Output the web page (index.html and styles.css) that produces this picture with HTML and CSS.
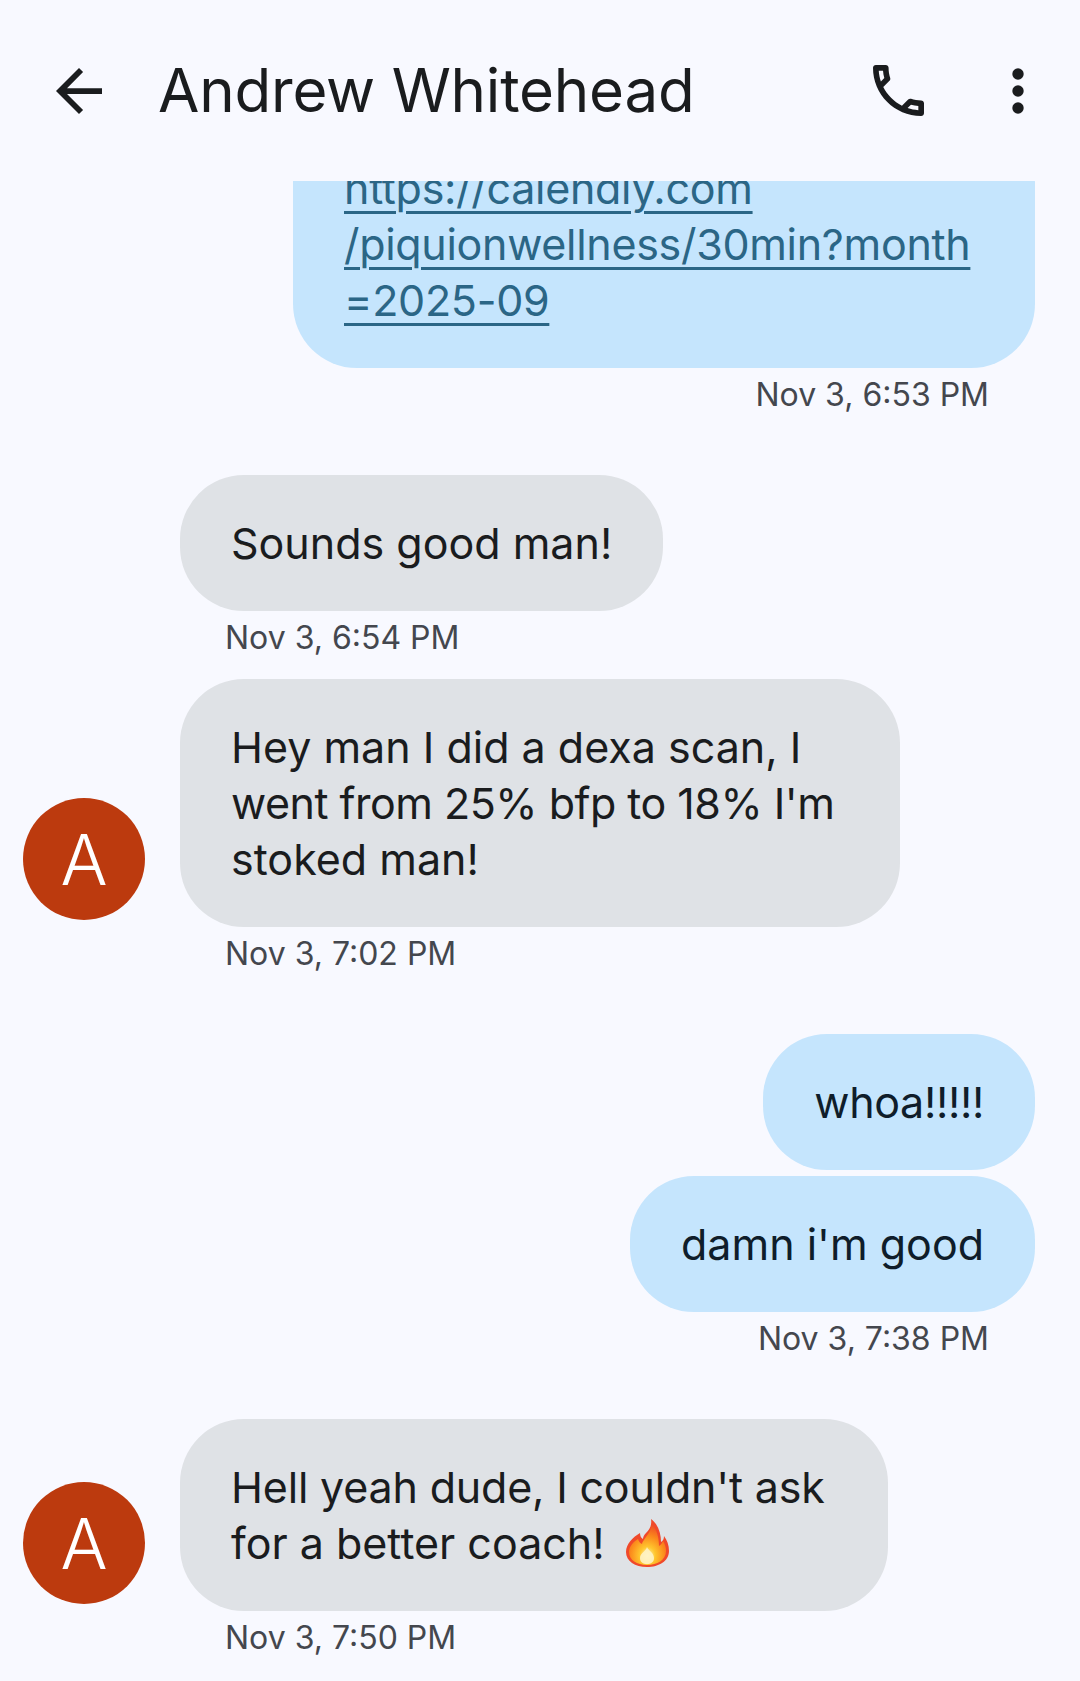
FILE: index.html
```html
<!DOCTYPE html>
<html lang="en">
<head>
<meta charset="utf-8">
<title>Andrew Whitehead</title>
<link rel="stylesheet" href="styles.css">
</head>
<body>
<div class="screen">
  <header class="appbar">
    <svg class="icon-back" viewBox="4 4 16 16" aria-hidden="true"><path d="M20 11H7.83l5.59-5.59L12 4l-8 8 8 8 1.41-1.41L7.83 13H20v-2z"/></svg>
    <h1 class="title">Andrew Whitehead</h1>
    <svg class="icon-call" viewBox="3 3 18 18" aria-hidden="true"><path d="M6.54 5c.06.89.21 1.76.45 2.59l-1.2 1.2c-.41-1.2-.67-2.47-.76-3.79h1.51m9.86 12.02c.85.24 1.72.39 2.6.45v1.49c-1.32-.09-2.59-.35-3.8-.75l1.2-1.19M7.5 3H4c-.55 0-1 .45-1 1 0 9.39 7.61 17 17 17 .55 0 1-.45 1-1v-3.49c0-.55-.45-1-1-1-1.24 0-2.45-.2-3.57-.57-.1-.04-.21-.05-.31-.05-.26 0-.51.1-.71.29l-2.2 2.2c-2.83-1.45-5.15-3.76-6.59-6.59l2.2-2.2c.28-.28.36-.67.25-1.02C8.7 6.45 8.5 5.25 8.5 4c0-.55-.45-1-1-1z"/></svg>
    <svg class="icon-more" viewBox="0 0 12 46" aria-hidden="true"><circle cx="6" cy="6" r="5.7"/><circle cx="6" cy="23" r="5.7"/><circle cx="6" cy="40" r="5.7"/></svg>
  </header>
  <main class="thread">
    <section class="group out clipped">
      <div class="row"><p class="bubble link-bubble"><a class="link" href="#">https://calendly.com<br>/piquionwellness/30min?month<br>=2025-09</a></p></div>
      <div class="ts">Nov 3, 6:53 PM</div>
    </section>
    <section class="group in near">
      <div class="row"><div class="slot"></div><p class="bubble">Sounds good man!</p></div>
      <div class="ts">Nov 3, 6:54 PM</div>
    </section>
    <section class="group in">
      <div class="row"><div class="avatar">A</div><p class="bubble wide-a">Hey man I did a dexa scan, I<br><span class="snug">went from 25% bfp to 18% I'm</span><br>stoked man!</p></div>
      <div class="ts">Nov 3, 7:02 PM</div>
    </section>
    <section class="group out">
      <div class="row"><p class="bubble tight">whoa!!!!!</p></div>
      <div class="row"><p class="bubble">damn i'm good</p></div>
      <div class="ts">Nov 3, 7:38 PM</div>
    </section>
    <section class="group in">
      <div class="row"><div class="avatar">A</div><p class="bubble wide-b"><span class="snug-light">Hell yeah dude, I couldn't ask</span><br>for a better coach! <svg class="flame" viewBox="0 0 43 48" aria-hidden="true"><defs><radialGradient id="fl" cx="0.5" cy="0.78" r="0.75"><stop offset="0" stop-color="#fff6c8"/><stop offset="0.28" stop-color="#ffc62e"/><stop offset="0.62" stop-color="#fb8a1c"/><stop offset="1" stop-color="#ee4a25"/></radialGradient></defs><path fill="#f0492a" d="M25 0c1 6-1 10-5 14-2 2-3 4-3 6-2-1-3-3-3-6C7 18 0 25 0 33c0 9 9 15 21 15s22-6 22-16c0-6-2-11-5-15 0 3-1 5-3 6 0-9-3-18-10-23z"/><path fill="url(#fl)" d="M25 4c1 6-2 10-5 14-2 3-4 5-4 7-2-1-3-2-4-5-5 3-9 8-9 13 0 8 8 13 18 13s19-5 19-14c0-4-1-7-3-10-1 2-2 4-4 5 0-8-2-17-8-23z"/><path fill="#fff3c4" opacity=".9" d="M21 28c1 3 7 6 7 11 0 4-3 6-7 6s-7-2-7-6c0-5 6-7 7-11z"/></svg></p></div>
      <div class="ts">Nov 3, 7:50 PM</div>
    </section>
  </main>
</div>
</body>
</html>
```
FILE: styles.css
```css
* { box-sizing: border-box; }
html, body { margin: 0; padding: 0; }
body {
  background: #f8f9ff;
  color: #1a1c1e;
  font-family: Inter, Roboto, sans-serif;
}
.screen {
  width: 1080px;
  height: 1681px;
  display: flex;
  flex-direction: column;
  overflow: hidden;
}
.appbar {
  height: 181px;
  flex: none;
  display: flex;
  align-items: center;
  padding: 0 56px;
}
.appbar svg { fill: #1a1c1e; flex: none; }
.icon-back { width: 46px; height: 46px; }
.title {
  margin: -2px 0 0 56px;
  flex: 1;
  font-size: 60px;
  font-weight: 400;
  line-height: 72px;
  letter-spacing: -0.2px;
}
.icon-call { width: 51px; height: 51px; }
.icon-more { width: 12px; height: 46px; margin-left: 88px; }
.thread {
  flex: 1;
  overflow: hidden;
  display: flex;
  flex-direction: column;
  padding: 0 45px 0 23px;
}
.group { margin-top: 61px; display: flex; flex-direction: column; gap: 6px; }
.group.clipped { margin-top: -61px; }
.group.near + .group { margin-top: 22px; }
.row { display: flex; align-items: flex-end; }
.out .row { justify-content: flex-end; }
.bubble {
  margin: 0;
  padding: 40px 51px;
  font-size: 43px;
  line-height: 56px;
  border-radius: 64px;
  white-space: nowrap;
}
.out .bubble { background: #c5e5fd; color: #0f1d2a; }
.in .bubble { background: #dfe2e6; }
.tight { letter-spacing: -0.35px; }
.snug { letter-spacing: -0.5px; }
.snug-light { letter-spacing: -0.18px; }
.link-bubble { width: 742px; }
.link {
  color: #2b6686;
  letter-spacing: -0.3px;
  text-decoration: underline;
  text-underline-offset: 7px;
  text-decoration-thickness: 3px;
}
.slot { width: 122px; flex: none; margin-right: 35px; }
.avatar {
  width: 122px;
  height: 122px;
  flex: none;
  margin: 0 35px 7px 0;
  border-radius: 50%;
  background: #bc3a0e;
  color: #fff;
  display: flex;
  align-items: center;
  justify-content: center;
  font-size: 70px;
  font-weight: 300;
}
.wide-a { width: 720px; }
.wide-b { width: 708px; }
.flame { width: 43px; height: 48px; vertical-align: -8px; margin-left: 9px; }
.ts {
  height: 40px;
  padding-top: 1px;
  line-height: 40px;
  font-size: 32px;
  color: #44474e;
}
.out .ts { text-align: right; padding-right: 46px; }
.in .ts { padding-left: 202px; }
```
